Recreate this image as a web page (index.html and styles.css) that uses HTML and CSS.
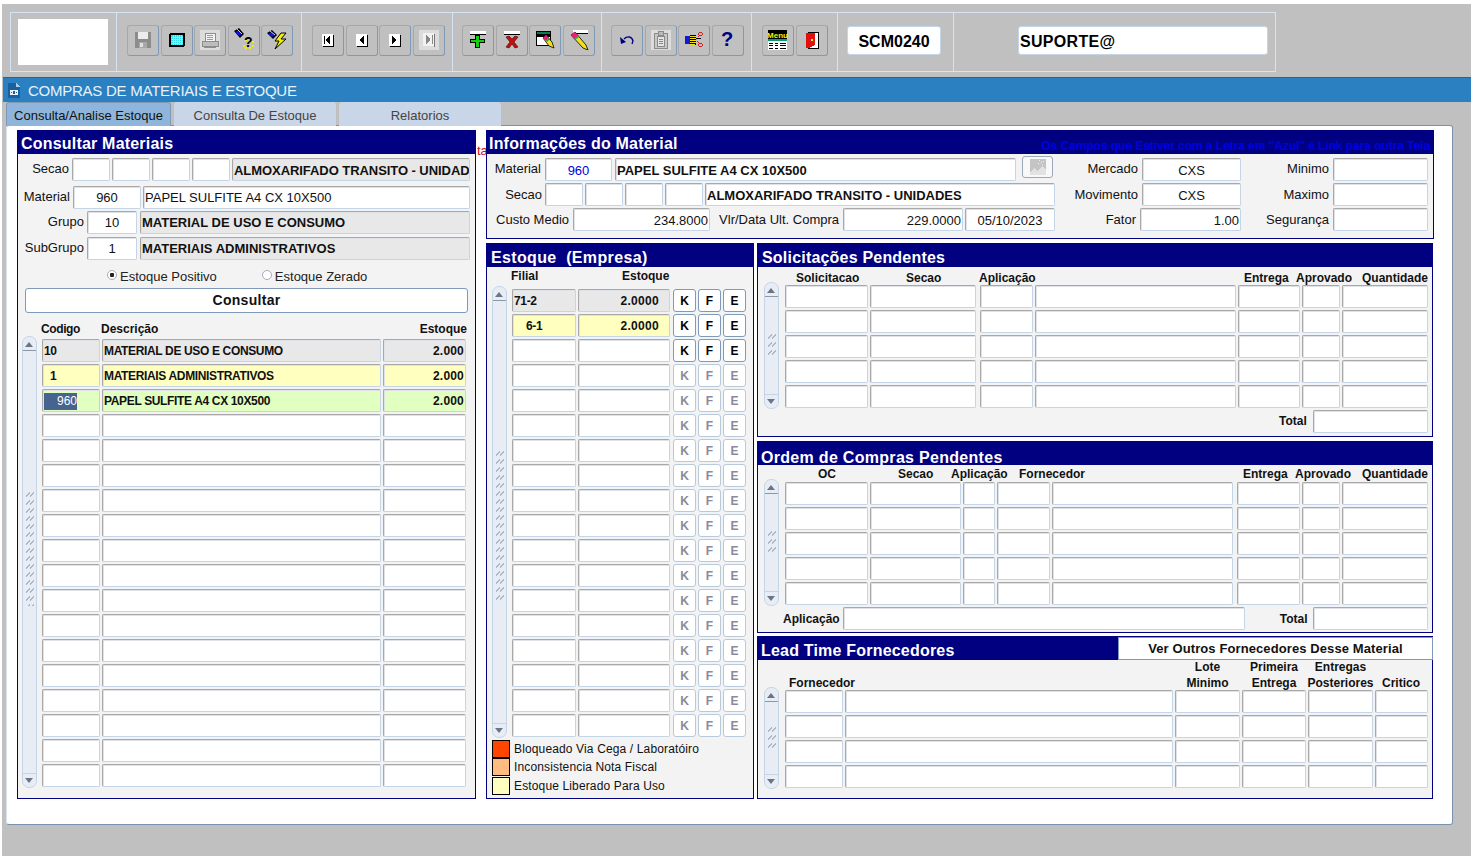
FILE: index.html
```html
<!DOCTYPE html>
<html lang="en">
<head>
    <meta charset="UTF-8">
    <title>Compras de Materiais e Estoque</title>
    <link rel="stylesheet" href="styles.css">
</head>
<body>
<div class="page">

    <!-- toolbar -->
    <div class="toolbar">
        <div class="cell cell-logo"><div class="logo"></div></div>

        <div class="cell cell-a">
            <div class="tbtn"><svg width="16" height="16" viewBox="0 0 16 16" shape-rendering="crispEdges"><rect width="16" height="16" fill="#8c8c8c"/><rect x="3" width="10" height="7" fill="#ececec"/><rect x="4" y="10" width="8" height="6" fill="#a8a8a8"/><rect x="5" y="11" width="3" height="4" fill="#e0e0e0"/></svg></div>
            <div class="tbtn"><svg width="16" height="14" viewBox="0 0 16 14" shape-rendering="crispEdges"><rect width="16" height="14" rx="2" fill="#000"/><rect x="2" y="2" width="12" height="10" fill="#35d8e8"/><path d="M4 2v10M6 2v10M8 2v10M10 2v10M12 2v10M2 4h12M2 6h12M2 8h12M2 10h12" stroke="#8fe9f5" stroke-width="1"/></svg></div>
            <div class="tbtn"><svg width="20" height="20" viewBox="0 0 20 20" shape-rendering="crispEdges"><rect width="20" height="20" fill="#dcdcdc"/><rect x="5" y="3" width="10" height="8" fill="#f4f4f4" stroke="#8c8c8c"/><path d="M7 5h6M7 7h6M7 9h6" stroke="#9a9a9a"/><rect x="2" y="11" width="16" height="5" fill="#bdbdbd" stroke="#8c8c8c"/><rect x="4" y="16" width="12" height="2" fill="#8c8c8c"/></svg></div>
            <div class="tbtn"><svg width="20" height="24" viewBox="0 0 20 24"><path d="M0 3l5-3 5 6-4 4z" fill="#000"/><path d="M1 4l4-2 3 4-3 2z" fill="#1010e0"/><path d="M3 1l5 5" stroke="#fff" stroke-width=".8"/><path d="M11 11h2v2h-2zM15 11h2v2h-2zM18 13h2v2h-2zM9 17h2v2h-2zM18 17h2v2h-2zM11 19h2v2h-2zM15 19h2v2h-2z" fill="#f0f000" shape-rendering="crispEdges"/><text x="10" y="19" class="tq">?</text></svg></div>
            <div class="tbtn"><svg width="20" height="20" viewBox="0 0 20 20"><path d="M0 3l5-3 5 5-4 4z" fill="#000"/><path d="M1 4l4-2 3 3-3 2z" fill="#1010e0"/><path d="M3 1l5 4" stroke="#fff" stroke-width=".8"/><path d="M14 3l-6 8h4l-4 8 11-10h-5l5-6z" fill="#f5f000" stroke="#000" stroke-width="1"/></svg></div>
        </div>

        <div class="cell cell-b">
            <div class="tbtn"><svg width="12" height="13" viewBox="0 0 12 13" shape-rendering="crispEdges"><rect width="11" height="12" fill="#fff"/><rect x="11" y="1" width="1" height="12" fill="#000"/><rect x="1" y="12" width="11" height="1" fill="#000"/><rect x="2" y="2" width="1" height="8" fill="#000"/><path d="M8 2v8h-1v-1h-1v-1h-1v-1h-1v-2h1v-1h1v-1h1v-1z" fill="#000"/></svg></div>
            <div class="tbtn"><svg width="12" height="13" viewBox="0 0 12 13" shape-rendering="crispEdges"><rect width="11" height="12" fill="#fff"/><rect x="11" y="1" width="1" height="12" fill="#000"/><rect x="1" y="12" width="11" height="1" fill="#000"/><path d="M8 2v8h-1v-1h-1v-1h-1v-1h-1v-2h1v-1h1v-1h1v-1z" fill="#000"/></svg></div>
            <div class="tbtn"><svg width="12" height="13" viewBox="0 0 12 13" shape-rendering="crispEdges"><rect width="11" height="12" fill="#fff"/><rect x="11" y="1" width="1" height="12" fill="#000"/><rect x="1" y="12" width="11" height="1" fill="#000"/><path d="M3 2v8h1v-1h1v-1h1v-1h1v-2h-1v-1h-1v-1h-1v-1z" fill="#000"/></svg></div>
            <div class="tbtn"><svg width="20" height="20" viewBox="0 0 20 20" shape-rendering="crispEdges"><rect width="20" height="20" fill="#dcdcdc"/><rect x="4" y="3" width="11" height="13" fill="#f2f2f2"/><rect x="15" y="4" width="1" height="13" fill="#777"/><path d="M7 5v9h1v-1h1v-1h1v-1h1v-3h-1v-1h-1v-1h-1v-1z" fill="#888"/><rect x="13" y="5" width="1" height="9" fill="#888"/></svg></div>
        </div>

        <div class="cell cell-c">
            <div class="tbtn"><svg width="18" height="18" viewBox="0 0 18 18" shape-rendering="crispEdges"><rect x="1" width="16" height="3" fill="#fff"/><rect x="1" y="3" width="16" height="1" fill="#000"/><path d="M6 4h5v4h5v4h-5v5h-5v-5h-5v-4h5z" fill="#000"/><path d="M7 5h3v4h5v2h-5v5h-3v-5h-5v-2h5z" fill="#10d010"/></svg></div>
            <div class="tbtn"><svg width="18" height="18" viewBox="0 0 18 18"><rect x="1" width="16" height="3" fill="#fff" shape-rendering="crispEdges"/><rect x="1" y="3" width="16" height="1" fill="#000" shape-rendering="crispEdges"/><path d="M3 6l3-1 3 3 3-3 3 1-4 5 4 5-3 1-3-4-3 4-3-1 4-5z" fill="#c01010" stroke="#400" stroke-width=".6"/></svg></div>
            <div class="tbtn"><svg width="19" height="18" viewBox="0 0 19 18"><rect x=".5" y=".5" width="14" height="14" fill="#fff" stroke="#000" shape-rendering="crispEdges"/><rect x="1" y="1" width="13" height="2" fill="#0a7a50" shape-rendering="crispEdges"/><rect x="1" y="3" width="13" height="3" fill="#000" shape-rendering="crispEdges"/><path d="M7 7l3-3 6 7 2 6-5-2z" fill="#f0e020" stroke="#000" stroke-width=".8"/><path d="M7 7l3-3 3 3-3 3z" fill="#e8207a"/><path d="M10 10l3-3 1 1-3 3z" fill="#10b040"/></svg></div>
            <div class="tbtn"><svg width="20" height="20" viewBox="0 0 20 20"><rect x="4" y="0" width="15" height="3" fill="#fff" shape-rendering="crispEdges"/><rect x="4" y="3" width="15" height="1" fill="#000" shape-rendering="crispEdges"/><path d="M2 5l4-3 11 13 2 5-5-2z" fill="#f0e020" stroke="#000" stroke-width=".8"/><path d="M2 5l4-3 3 4-4 3z" fill="#e8207a"/><path d="M5 9l4-3 1 1-4 3z" fill="#10b040"/></svg></div>
        </div>

        <div class="cell cell-d">
            <div class="tbtn"><svg width="14" height="10" viewBox="0 0 14 10"><path d="M4 4c3-3 8-3 9 2l-1 3" fill="none" stroke="#000080" stroke-width="1.3"/><path d="M0 2l1 7 5-2z" fill="#000080"/></svg></div>
            <div class="tbtn"><svg width="20" height="20" viewBox="0 0 20 20" shape-rendering="crispEdges"><rect width="20" height="20" fill="#dcdcdc"/><rect x="3" y="3" width="13" height="15" fill="#c8c8c8" stroke="#8a8a8a"/><rect x="6" y="6" width="7" height="10" fill="#e4e4e4" stroke="#8a8a8a"/><rect x="7" y="1" width="5" height="4" fill="#bbb" stroke="#8a8a8a"/><path d="M8 9h4M8 11h4M8 13h4" stroke="#8a8a8a"/></svg></div>
            <div class="tbtn"><svg width="18" height="16" viewBox="0 0 18 16" shape-rendering="crispEdges"><rect y="4" width="5" height="8" fill="#1818d0"/><rect x="5" y="3" width="6" height="10" fill="#000"/><path d="M5 4h6v1h-6zM5 6h6v1h-6zM5 8h6v1h-6zM5 10h6v1h-6zM5 12h5v1h-5z" fill="#f0e020"/><rect x="11" y="5" width="5" height="1" fill="#f0e020"/><rect x="11" y="6" width="5" height="1" fill="#000"/><path d="M14 0h3v1h1v2h-1v1h-3v-1h-1v-2h1zM14 1v2h3v-2z" fill="#d02020" fill-rule="evenodd"/><path d="M14 11h3v1h1v2h-1v1h-3v-1h-1v-2h1zM14 12v2h3v-2z" fill="#d02020" fill-rule="evenodd"/><path d="M13 4h1v1h-1zM12 9h1v1h-1zM13 10h1v1h-1z" fill="#d02020"/></svg></div>
            <div class="tbtn"><svg width="16" height="22" viewBox="0 0 16 22"><text x="7" y="17" class="thelp">?</text></svg></div>
        </div>

        <div class="cell cell-e">
            <div class="tbtn"><svg width="20" height="20" viewBox="0 0 20 20" shape-rendering="crispEdges"><rect width="19" height="9" fill="#000"/><text x="9.5" y="7.7" class="tmenu">Menu</text><rect y="9" width="19" height="2" fill="#0a9a70"/><rect y="11" width="19" height="9" fill="#fff"/><path d="M1 13h4M7 13h3M12 13h6M1 15h4M7 15h3M12 15h6M1 18h4M7 18h3M12 18h6" stroke="#000"/></svg></div>
            <div class="tbtn"><svg width="14" height="17" viewBox="0 0 14 17" shape-rendering="crispEdges"><rect x="3" width="11" height="17" fill="#000"/><rect x="4" y="1" width="9" height="15" fill="#fff"/><path d="M1 1h9v12l-6 3h-3z" fill="#e01010"/><rect x="6" y="7" width="2" height="2" fill="#f0f000"/></svg></div>
        </div>

        <div class="cell cell-f"><div class="tfield tcode">SCM0240</div></div>
        <div class="cell cell-g"><div class="tfield tuser">SUPORTE@</div></div>
    </div>

    <!-- window title -->
    <div class="titlebar">
        <svg width="12" height="15" viewBox="0 0 12 15" shape-rendering="crispEdges"><path d="M0 0h8l4 4v11h-12z" fill="#1a5f9e"/><path d="M8 0v4h4" fill="#a9cce8"/><rect x="2" y="7" width="8" height="5" fill="#e8f2fb"/><path d="M3 9h1v1h-1zM5 8h2v3h-2zM8 9h1v1h-1z" fill="#1a5f9e"/></svg>
        <span>COMPRAS DE MATERIAIS E ESTOQUE</span>
    </div>

    <div class="tabs">
        <div class="tab active">Consulta/Analise Estoque</div>
        <div class="tab">Consulta De Estoque</div>
        <div class="tab">Relatorios</div>
    </div>

    <div class="canvas">
        <div class="form">

            <!-- left panel -->
            <div class="panel p-left">
                <div class="phead">Consultar Materiais</div>
                <div class="row r-sec1">
                    <label class="w51">Secao</label>
                    <div class="f w38"></div><div class="f w38 ml2"></div><div class="f w38 ml2"></div><div class="f w38 ml2"></div>
                    <div class="f ro b w238 ml2 tight">ALMOXARIFADO TRANSITO - UNIDAD</div>
                </div>
                <div class="row r-mat1">
                    <label class="w52">Material</label>
                    <div class="f w68 c">960</div>
                    <div class="f w327 ml2">PAPEL SULFITE A4 CX 10X500</div>
                </div>
                <div class="row r-gru">
                    <label class="w66">Grupo</label>
                    <div class="f w50 c">10</div>
                    <div class="f ro b w330 ml3">MATERIAL DE USO E CONSUMO</div>
                </div>
                <div class="row r-sub">
                    <label class="w66">SubGrupo</label>
                    <div class="f w50 c">1</div>
                    <div class="f ro b w330 ml3">MATERIAIS ADMINISTRATIVOS</div>
                </div>
                <div class="radios">
                    <span class="radio on"></span><span class="rlabel">Estoque Positivo</span>
                    <span class="radio radio2"></span><span class="rlabel">Estoque Zerado</span>
                </div>
                <div class="bigbtn">Consultar</div>
                <div class="cols cols-left"><span class="cod">Codigo</span><span>Descrição</span><span>Estoque</span></div>
                <div class="listwrap lw-left">
                    <div class="sbar"><div class="sup"></div><div class="strack"><div class="grip g115"></div></div><div class="sdown"></div></div>
                    <div class="list l-left">
                        <div class="f ro t">10</div><div class="f ro t">MATERIAL DE USO E CONSUMO</div><div class="f ro t r">2.000</div>
                        <div class="f yel t in">1</div><div class="f yel t">MATERIAIS ADMINISTRATIVOS</div><div class="f yel t r">2.000</div>
                        <div class="f grn t"><span class="sel">960</span></div><div class="f grn t">PAPEL SULFITE A4 CX 10X500</div><div class="f grn t r">2.000</div>
                        <div class="f"></div><div class="f"></div><div class="f"></div>
                        <div class="f"></div><div class="f"></div><div class="f"></div>
                        <div class="f"></div><div class="f"></div><div class="f"></div>
                        <div class="f"></div><div class="f"></div><div class="f"></div>
                        <div class="f"></div><div class="f"></div><div class="f"></div>
                        <div class="f"></div><div class="f"></div><div class="f"></div>
                        <div class="f"></div><div class="f"></div><div class="f"></div>
                        <div class="f"></div><div class="f"></div><div class="f"></div>
                        <div class="f"></div><div class="f"></div><div class="f"></div>
                        <div class="f"></div><div class="f"></div><div class="f"></div>
                        <div class="f"></div><div class="f"></div><div class="f"></div>
                        <div class="f"></div><div class="f"></div><div class="f"></div>
                        <div class="f"></div><div class="f"></div><div class="f"></div>
                        <div class="f"></div><div class="f"></div><div class="f"></div>
                        <div class="f"></div><div class="f"></div><div class="f"></div>
                    </div>
                </div>
            </div>

            <div class="spacer"><span class="stray">ta</span></div>

            <div class="rightcol">
                <!-- material info -->
                <div class="panel p-info">
                    <div class="phead phead-info">Informações do Material<span class="note">Os Campos que Estiver com a Letra em "Azul" é Link para outra Tela</span></div>
                    <div class="row r-i1">
                        <label class="w54">Material</label>
                        <div class="f w67 c link ml1">960</div>
                        <div class="f b w401 ml3">PAPEL SULFITE A4 CX 10X500</div>
                        <div class="imgbtn"><svg width="16" height="16" viewBox="0 0 16 16" shape-rendering="crispEdges"><rect width="16" height="16" fill="#c4c4c4"/><path d="M0 13l4-4 3 3 5-5 4 4v5h-16z" fill="#e2e2e2"/><path d="M9 1h1v1h-1zM11 3h1v1h-1zM13 2h1v1h-1zM12 5h1v1h-1zM8 4h1v1h-1z" fill="#f0f0f0"/></svg></div>
                        <label class="w85">Mercado</label>
                        <div class="f w99 c">CXS</div>
                        <label class="w88">Minimo</label>
                        <div class="f w95"></div>
                    </div>
                    <div class="row r-i2">
                        <label class="w55">Secao</label>
                        <div class="f w38"></div><div class="f w38 ml2"></div><div class="f w38 ml2"></div><div class="f w38 ml2"></div>
                        <div class="f b w350 ml2">ALMOXARIFADO TRANSITO - UNIDADES</div>
                        <label class="w83">Movimento</label>
                        <div class="f w99 c">CXS</div>
                        <label class="w88">Maximo</label>
                        <div class="f w95"></div>
                    </div>
                    <div class="row r-i3">
                        <label class="w82">Custo Medio</label>
                        <div class="f w137 r">234.8000</div>
                        <label class="w129">Vlr/Data Ult. Compra</label>
                        <div class="f w120 r">229.0000</div>
                        <div class="f w90 c ml2">05/10/2023</div>
                        <label class="w81">Fator</label>
                        <div class="f w101 r">1.00</div>
                        <label class="w88">Segurança</label>
                        <div class="f w95"></div>
                    </div>
                </div>

                <div class="lower">
                    <!-- stock per branch -->
                    <div class="panel p-stock">
                        <div class="phead phead-stock">Estoque&nbsp; (Empresa)</div>
                        <div class="cols cols-stock"><span>Filial</span><span>Estoque</span></div>
                        <div class="listwrap lw-stock">
                            <div class="sbar"><div class="sup"></div><div class="strack"><div class="grip g150"></div></div><div class="sdown"></div></div>
                            <div class="list l-stock">
                                <div class="f ro t">71-2</div><div class="f ro t qty">2.0000</div><div class="k on">K</div><div class="k on">F</div><div class="k on">E</div>
                                <div class="f yel t in2">6-1</div><div class="f yel t qty">2.0000</div><div class="k on">K</div><div class="k on">F</div><div class="k on">E</div>
                                <div class="f"></div><div class="f"></div><div class="k on">K</div><div class="k on">F</div><div class="k on">E</div>
                                <div class="f"></div><div class="f"></div><div class="k">K</div><div class="k">F</div><div class="k">E</div>
                                <div class="f"></div><div class="f"></div><div class="k">K</div><div class="k">F</div><div class="k">E</div>
                                <div class="f"></div><div class="f"></div><div class="k">K</div><div class="k">F</div><div class="k">E</div>
                                <div class="f"></div><div class="f"></div><div class="k">K</div><div class="k">F</div><div class="k">E</div>
                                <div class="f"></div><div class="f"></div><div class="k">K</div><div class="k">F</div><div class="k">E</div>
                                <div class="f"></div><div class="f"></div><div class="k">K</div><div class="k">F</div><div class="k">E</div>
                                <div class="f"></div><div class="f"></div><div class="k">K</div><div class="k">F</div><div class="k">E</div>
                                <div class="f"></div><div class="f"></div><div class="k">K</div><div class="k">F</div><div class="k">E</div>
                                <div class="f"></div><div class="f"></div><div class="k">K</div><div class="k">F</div><div class="k">E</div>
                                <div class="f"></div><div class="f"></div><div class="k">K</div><div class="k">F</div><div class="k">E</div>
                                <div class="f"></div><div class="f"></div><div class="k">K</div><div class="k">F</div><div class="k">E</div>
                                <div class="f"></div><div class="f"></div><div class="k">K</div><div class="k">F</div><div class="k">E</div>
                                <div class="f"></div><div class="f"></div><div class="k">K</div><div class="k">F</div><div class="k">E</div>
                                <div class="f"></div><div class="f"></div><div class="k">K</div><div class="k">F</div><div class="k">E</div>
                                <div class="f"></div><div class="f"></div><div class="k">K</div><div class="k">F</div><div class="k">E</div>
                            </div>
                        </div>
                        <div class="legend">
                            <div class="leg"><span class="sw sw-red"></span>Bloqueado Via Cega / Laboratóiro</div>
                            <div class="leg"><span class="sw sw-org"></span>Inconsistencia Nota Fiscal</div>
                            <div class="leg leg3"><span class="sw sw-yel"></span>Estoque Liberado Para Uso</div>
                        </div>
                    </div>

                    <div class="stack">
                        <!-- pending requests -->
                        <div class="panel p-sol">
                            <div class="phead phead-sol">Solicitações Pendentes</div>
                            <div class="cols cols-sol"><span>Solicitacao</span><span>Secao</span><span>Aplicação</span><span>Entrega</span><span>Aprovado</span><span>Quantidade</span></div>
                            <div class="listwrap lw-sol">
                                <div class="sbar"><div class="sup"></div><div class="strack"><div class="grip g25"></div></div><div class="sdown"></div></div>
                                <div class="list l-sol">
                                    <div class="f"></div><div class="f"></div><div class="f"></div><div class="f"></div><div class="f"></div><div class="f"></div><div class="f"></div>
                                    <div class="f"></div><div class="f"></div><div class="f"></div><div class="f"></div><div class="f"></div><div class="f"></div><div class="f"></div>
                                    <div class="f"></div><div class="f"></div><div class="f"></div><div class="f"></div><div class="f"></div><div class="f"></div><div class="f"></div>
                                    <div class="f"></div><div class="f"></div><div class="f"></div><div class="f"></div><div class="f"></div><div class="f"></div><div class="f"></div>
                                    <div class="f"></div><div class="f"></div><div class="f"></div><div class="f"></div><div class="f"></div><div class="f"></div><div class="f"></div>
                                </div>
                            </div>
                            <div class="totals totals-sol"><span class="tlabel">Total</span><div class="f w115"></div></div>
                        </div>

                        <!-- pending purchase orders -->
                        <div class="panel p-ord">
                            <div class="phead phead-low">Ordem de Compras Pendentes</div>
                            <div class="cols cols-ord"><span>OC</span><span>Secao</span><span>Aplicação</span><span>Fornecedor</span><span>Entrega</span><span>Aprovado</span><span>Quantidade</span></div>
                            <div class="listwrap lw-ord">
                                <div class="sbar"><div class="sup"></div><div class="strack"><div class="grip g25"></div></div><div class="sdown"></div></div>
                                <div class="list l-ord">
                                    <div class="f"></div><div class="f"></div><div class="f"></div><div class="f"></div><div class="f"></div><div class="f"></div><div class="f"></div><div class="f"></div>
                                    <div class="f"></div><div class="f"></div><div class="f"></div><div class="f"></div><div class="f"></div><div class="f"></div><div class="f"></div><div class="f"></div>
                                    <div class="f"></div><div class="f"></div><div class="f"></div><div class="f"></div><div class="f"></div><div class="f"></div><div class="f"></div><div class="f"></div>
                                    <div class="f"></div><div class="f"></div><div class="f"></div><div class="f"></div><div class="f"></div><div class="f"></div><div class="f"></div><div class="f"></div>
                                    <div class="f"></div><div class="f"></div><div class="f"></div><div class="f"></div><div class="f"></div><div class="f"></div><div class="f"></div><div class="f"></div>
                                </div>
                            </div>
                            <div class="totals totals-ord"><span class="tlabel t-apl">Aplicação</span><div class="f w402"></div><span class="tlabel t-tot">Total</span><div class="f w115"></div></div>
                        </div>

                        <!-- supplier lead time -->
                        <div class="panel p-lead">
                            <div class="phead phead-lead"><span>Lead Time Fornecedores</span><div class="verbtn">Ver Outros Fornecedores Desse Material</div></div>
                            <div class="cols cols-lead"><span>Fornecedor</span><span>Lote<br>Minimo</span><span>Primeira<br>Entrega</span><span>Entregas<br>Posteriores</span><span>Critico</span></div>
                            <div class="listwrap lw-lead">
                                <div class="sbar"><div class="sup"></div><div class="strack"><div class="grip g25"></div></div><div class="sdown"></div></div>
                                <div class="list l-lead">
                                    <div class="f"></div><div class="f"></div><div class="f"></div><div class="f"></div><div class="f"></div><div class="f"></div>
                                    <div class="f"></div><div class="f"></div><div class="f"></div><div class="f"></div><div class="f"></div><div class="f"></div>
                                    <div class="f"></div><div class="f"></div><div class="f"></div><div class="f"></div><div class="f"></div><div class="f"></div>
                                    <div class="f"></div><div class="f"></div><div class="f"></div><div class="f"></div><div class="f"></div><div class="f"></div>
                                </div>
                            </div>
                        </div>
                    </div>
                </div>
            </div>

        </div>
    </div>

</div>
</body>
</html>
```

FILE: styles.css
```css
*{
    box-sizing: border-box;
}

html, body{
    margin: 0;
    height: 100%;
}

body{
    background-color: #c0c0c0;
    font-family: "Liberation Sans", Arial, sans-serif;
    font-size: 13px;
    color: #111;
    overflow: hidden;
}

.page{
    width: 1471px;
    height: 856px;
    border-top: 4px solid #fff;
    border-left: 2px solid #fff;
    overflow: hidden;
}

/* toolbar */
.toolbar{
    display: flex;
    width: 1266px;
    height: 60px;
    margin: 8px 0 0 8px;
    border: 1px solid #d6e3f1;
}

.cell{
    display: flex;
    align-items: center;
    gap: 1.5px;
    border-right: 1px solid #d6e3f1;
    padding-bottom: 4px;
}

.cell-logo{ width: 106px; padding: 0 0 0 7px; }
.cell-a{ width: 185px; padding-left: 10px; }
.cell-b{ width: 151px; padding-left: 10px; }
.cell-c{ width: 149px; padding-left: 9px; }
.cell-d{ width: 150px; padding-left: 9px; }
.cell-e{ width: 86px; padding-left: 10px; }
.cell-f{ width: 116px; padding-left: 9px; }
.cell-g{ width: 321px; padding-left: 64px; border-right: none; }

.logo{
    width: 90px;
    height: 46px;
    background-color: #fff;
}

.tbtn{
    display: flex;
    align-items: center;
    justify-content: center;
    width: 32px;
    height: 31px;
    border: 1px solid;
    border-color: #a8a8a8 #7f9ab8 #7f9ab8 #a8a8a8;
    border-radius: 3px;
}

.tq{
    font: bold 14px "Liberation Sans", sans-serif;
    fill: #000;
}

.thelp{
    font: bold 20px "Liberation Sans", sans-serif;
    fill: #000080;
    text-anchor: middle;
}

.tmenu{
    font: bold 8px "Liberation Sans", sans-serif;
    fill: #f5f000;
    text-anchor: middle;
}

.tfield{
    background-color: #fff;
    border: 1px solid #c5d5e8;
    border-radius: 3px;
    font-weight: bold;
    color: #000;
}

.tcode{
    width: 94px;
    height: 29px;
    line-height: 29px;
    font-size: 16px;
    text-align: center;
}

.tuser{
    width: 250px;
    height: 29px;
    line-height: 29px;
    font-size: 16px;
    letter-spacing: .3px;
    padding-left: 1px;
}

/* title + tabs */
.titlebar{
    display: flex;
    align-items: center;
    gap: 8px;
    height: 25px;
    margin: 5px 0 0 1px;
    padding-left: 5px;
    background-color: #2b80c1;
    border-top: 1px solid #4a5a6a;
    color: #e8f2fb;
    font-size: 15px;
    letter-spacing: -.25px;
}

.tabs{
    display: flex;
    gap: 3px;
    height: 23px;
    margin-left: 4px;
    position: relative;
    z-index: 1;
}

.tab{
    width: 162px;
    height: 24px;
    background-color: #c8d6e8;
    border-radius: 3px 3px 0 0;
    color: #444;
    font-size: 13px;
    line-height: 27px;
    text-align: center;
}

.tab.active{
    width: 165px;
    background-color: #8fb6da;
    border: 1px solid #7f9ab8;
    border-bottom: none;
    color: #111;
    line-height: 25px;
}

.canvas{
    width: 1447px;
    height: 700px;
    margin-left: 4px;
    padding: 4px 0 0 10px;
    background-color: #fff;
    border: 1px solid #7a92ad;
    border-radius: 3px;
    border-left-color: #d6e3f1;
}

.form{
    display: flex;
    height: 669px;
}

/* panels */
.panel{
    border: 1px solid #000080;
    background-color: #f3f3f3;
}

.phead{
    height: 23px;
    padding-left: 3px;
    background-color: #000080;
    color: #fff;
    font-size: 16px;
    font-weight: bold;
    letter-spacing: .2px;
    line-height: 26px;
    white-space: nowrap;
}

.phead-stock{
    padding-left: 4px;
    letter-spacing: .35px;
    line-height: 28px;
}

.phead-sol{
    padding-left: 4px;
    line-height: 28px;
}

.p-left{ width: 459px; }

.spacer{
    width: 10px;
    padding-top: 13px;
}

.stray{
    color: #d01010;
    font-size: 13px;
    margin-left: 1px;
}

.rightcol{ width: 948px; }

.p-info{ height: 109px; }

.phead-info{
    display: flex;
    justify-content: space-between;
    padding-left: 2px;
    padding-right: 3px;
}

.note{
    color: #0000e0;
    font-size: 12px;
    font-weight: bold;
    letter-spacing: -.06px;
    line-height: 30px;
}

.lower{
    display: flex;
    gap: 3px;
    margin-top: 4px;
}

.p-stock{
    width: 268px;
    height: 556px;
}

.stack{
    width: 676px;
}

.p-sol{ height: 194px; }
.p-ord{ height: 192px; margin-top: 4px; }
.p-lead{ height: 163px; margin-top: 3px; }

.phead-low{
    letter-spacing: .3px;
    line-height: 32px;
}

.phead-lead{
    display: flex;
    justify-content: space-between;
    line-height: 28px;
}

.verbtn{
    width: 315px;
    height: 23px;
    margin-right: -1px;
    background-color: #fff;
    border: 1px solid #7f9ab8;
    color: #111;
    font-size: 13px;
    letter-spacing: .1px;
    line-height: 22px;
    text-align: center;
}

/* fields */
.row{
    display: flex;
    align-items: flex-start;
}

.row label{
    flex: none;
    padding-right: 3px;
    line-height: 21px;
    text-align: right;
}

.f{
    flex: none;
    height: 23px;
    padding: 0 1px;
    background-color: #fff;
    border: 1px solid;
    border-color: #a8a8a8 #c5d5e8 #c5d5e8 #a8a8a8;
    border-radius: 2px;
    box-shadow: inset 1px 1px 0 #dfe3e8;
    line-height: 22px;
    overflow: hidden;
    white-space: nowrap;
}

.r-sec1 .f, .r-i1 .f, .r-i2 .f, .r-i3 .f{ line-height: 24px; }
.r-i2 label, .r-i3 label{ line-height: 23px; }

.ro{ background-color: #e8e8e8; }
.b{ font-weight: bold; }
.c{ text-align: center; }
.r{ text-align: right; }
.link{ color: #0000e0; }
.tight{ letter-spacing: -.06px; }

.yel{ background-color: #ffffc0; }
.grn{ background-color: #e0ffc0; }

.t{
    font-size: 12px;
    font-weight: bold;
    letter-spacing: -.35px;
}

.t.r{ letter-spacing: .2px; }

.in{ padding-left: 7px; }
.in2{ padding-left: 13px; }
.qty{
    padding-right: 10px;
    letter-spacing: .3px;
    text-align: right;
}

.sel{
    display: inline-block;
    width: 33px;
    height: 17px;
    line-height: 17px;
    background-color: #47648f;
    color: #fff;
    font-weight: normal;
    letter-spacing: 0;
    text-align: right;
}

.ml1{ margin-left: 1px; }
.ml2{ margin-left: 2px; }
.ml3{ margin-left: 3px; }

.w38{ width: 38px; }
.w50{ width: 50px; }
.w51{ width: 54px; }
.w52{ width: 55px; }
.w54{ width: 57px; }
.w55{ width: 58px; }
.w66{ width: 69px; }
.w67{ width: 67px; }
.w68{ width: 68px; }
.w81{ width: 85px; }
.w82{ width: 86px; }
.w83{ width: 87px; }
.w85{ width: 89px; }
.w88{ width: 92px; }
.w90{ width: 90px; }
.w95{ width: 95px; }
.w99{ width: 99px; }
.w101{ width: 101px; }
.w115{ width: 115px; }
.w120{ width: 120px; }
.w129{ width: 133px; }
.w137{ width: 137px; }
.w238{ width: 238px; }
.w327{ width: 327px; }
.w330{ width: 330px; }
.w350{ width: 350px; }
.w401{ width: 401px; }
.w402{ width: 402px; }

.row label.w81, .row label.w82, .row label.w83, .row label.w85, .row label.w88, .row label.w129{
    padding-right: 4px;
}

.r-sec1{ margin-top: 4px; }
.r-mat1{ margin-top: 5px; }
.r-gru{ margin-top: 2px; }
.r-sub{ margin-top: 3px; }

.r-i1{ margin-top: 4px; }
.r-i2{ margin-top: 2px; }
.r-i3{ margin-top: 2px; }

.imgbtn{
    display: flex;
    align-items: center;
    justify-content: center;
    flex: none;
    width: 31px;
    height: 22px;
    margin: -2px 0 0 6px;
    background-color: #f8f8f8;
    border: 1px solid #9aa8b8;
    border-radius: 3px;
}

/* radios + big button */
.radios{
    display: flex;
    align-items: center;
    height: 16px;
    margin-top: 8px;
    padding-left: 89px;
}

.radio{
    width: 10px;
    height: 10px;
    margin-top: -2px;
    border: 1px solid #aab;
    border-radius: 50%;
    background-color: #fff;
}

.radio.on{
    background: radial-gradient(circle, #222 0 2px, #fff 2.5px);
}

.radio2{ margin-left: 45px; }

.rlabel{
    margin-left: 3px;
    font-size: 13px;
    color: #222;
}

.bigbtn{
    width: 443px;
    height: 25px;
    margin: 4px 0 0 7px;
    background-color: #fff;
    border: 1px solid #7f9ab8;
    border-radius: 3px;
    font-size: 14px;
    font-weight: bold;
    letter-spacing: .3px;
    line-height: 23px;
    text-align: center;
}

/* column headers */
.cols{
    display: grid;
    font-size: 12px;
    font-weight: bold;
    white-space: nowrap;
}

.cod{ letter-spacing: -.4px; }

.cols-left{
    grid-template-columns: 60px 1fr auto;
    height: 14px;
    margin: 9px 8px 3px 23px;
    line-height: 14px;
}

.cols-stock{
    grid-template-columns: 111px auto;
    justify-content: start;
    height: 16px;
    margin: 1px 0 0 24px;
    line-height: 16px;
}

.cols-sol{
    grid-template-columns: 110px 73px 265px 52px 66px auto;
    justify-content: start;
    height: 14px;
    margin: 4px 0 0 38px;
    line-height: 14px;
}

.cols-ord{
    grid-template-columns: 80px 53px 68px 224px 52px 67px auto;
    justify-content: start;
    height: 14px;
    margin: 2px 0 1px 60px;
    line-height: 14px;
}

.cols-lead{
    grid-template-columns: 385px 67px 66px 67px auto;
    justify-content: start;
    align-items: end;
    height: 30px;
    margin: -1px 0 1px 31px;
    line-height: 16px;
    text-align: center;
}

.cols-lead span:first-child{ text-align: left; }
.cols-lead span:last-child{ margin-left: 8px; }

/* lists */
.listwrap{
    display: flex;
}

.list{
    display: grid;
    grid-auto-rows: 23px;
    gap: 2px;
}

.lw-left{ margin-left: 4px; }
.l-left{
    grid-template-columns: 58px 279px 83px;
    margin-left: 5px;
}

.lw-stock{ margin: 5px 0 0 5px; }
.l-stock{
    grid-template-columns: 64px 92px 24px 23px 23px;
    margin-left: 5px;
}

.k{
    background-color: #fff;
    border: 1px solid #b9c9dc;
    border-radius: 3px;
    color: #8a8a9a;
    font-size: 12px;
    font-weight: bold;
    line-height: 22px;
    text-align: center;
}

.k.on{
    border-color: #7f9ab8;
    color: #000;
}

.l-stock .k:nth-child(5n+3){ margin-left: 1px; }

.lw-sol{ margin: 0 0 0 6px; }
.l-sol{
    grid-template-columns: 83px 106px 55px 201px 62px 38px 86px;
    margin-left: 6px;
}

.l-sol .f:nth-child(7n+3){ margin-left: 2px; }

.lw-ord{ margin-left: 6px; }
.l-ord{
    grid-template-columns: 83px 91px 32px 53px 181px 65px 38px 86px;
    margin-left: 6px;
}

.l-ord .f:nth-child(8n+6){ margin-left: 2px; }

.lw-lead{ margin-left: 6px; }
.l-lead{
    grid-template-columns: 58px 328px 65px 64px 65px 53px;
    margin-left: 6px;
}

/* scroll bar */
.sbar{
    display: flex;
    flex-direction: column;
    flex: none;
    width: 15px;
    margin: -3px 0 -1px;
    background-color: #e8edf5;
    border: 1px solid #c5d5e8;
    border-radius: 7px;
}

.sup, .sdown{
    position: relative;
    flex: none;
    height: 14px;
}

.sup{ border-bottom: 1px solid #8a98a8; }
.sdown{ border-top: 1px solid #c5d5e8; }

.sup::after, .sdown::after{
    content: "";
    position: absolute;
    left: 2px;
    border: 4px solid transparent;
}

.sup::after{
    top: 1px;
    border-bottom: 5px solid #6a7686;
}

.sdown::after{
    top: 4px;
    border-top: 5px solid #6a7686;
}

.strack{
    display: flex;
    flex: 1;
    align-items: center;
    justify-content: center;
}

.grip{
    width: 8px;
    background-image: linear-gradient(135deg, transparent 38%, #aab8c8 38% 58%, transparent 58%);
    background-size: 4px 8px;
    background-repeat: repeat;
}

.g115{ height: 115px; margin-top: -28px; }
.g150{ height: 150px; margin-top: 26px; }
.g25{ height: 25px; }

/* totals */
.totals{
    display: flex;
    align-items: flex-start;
    margin-top: 2px;
}

.tlabel{
    font-size: 12px;
    font-weight: bold;
    line-height: 22px;
}

.totals-sol{ padding-left: 521px; }
.totals-sol .tlabel{ margin-right: 6px; }

.totals-ord{ padding-left: 25px; }
.totals-ord .tlabel{ line-height: 25px; }
.t-apl{ margin-right: 3px; }
.t-tot{ margin: 0 6px 0 35px; }

/* legend */
.legend{
    margin: 3px 0 0 5px;
}

.leg{
    display: flex;
    align-items: center;
    height: 18px;
    font-size: 12px;
    letter-spacing: .14px;
}

.leg3{ margin-top: 1px; }

.sw{
    width: 18px;
    height: 18px;
    margin-right: 4px;
    border: 1px solid #000;
}

.sw-red{ background-color: #ff4500; }
.sw-org{ background-color: #ffbb80; }
.sw-yel{ background-color: #ffffc0; }
```
